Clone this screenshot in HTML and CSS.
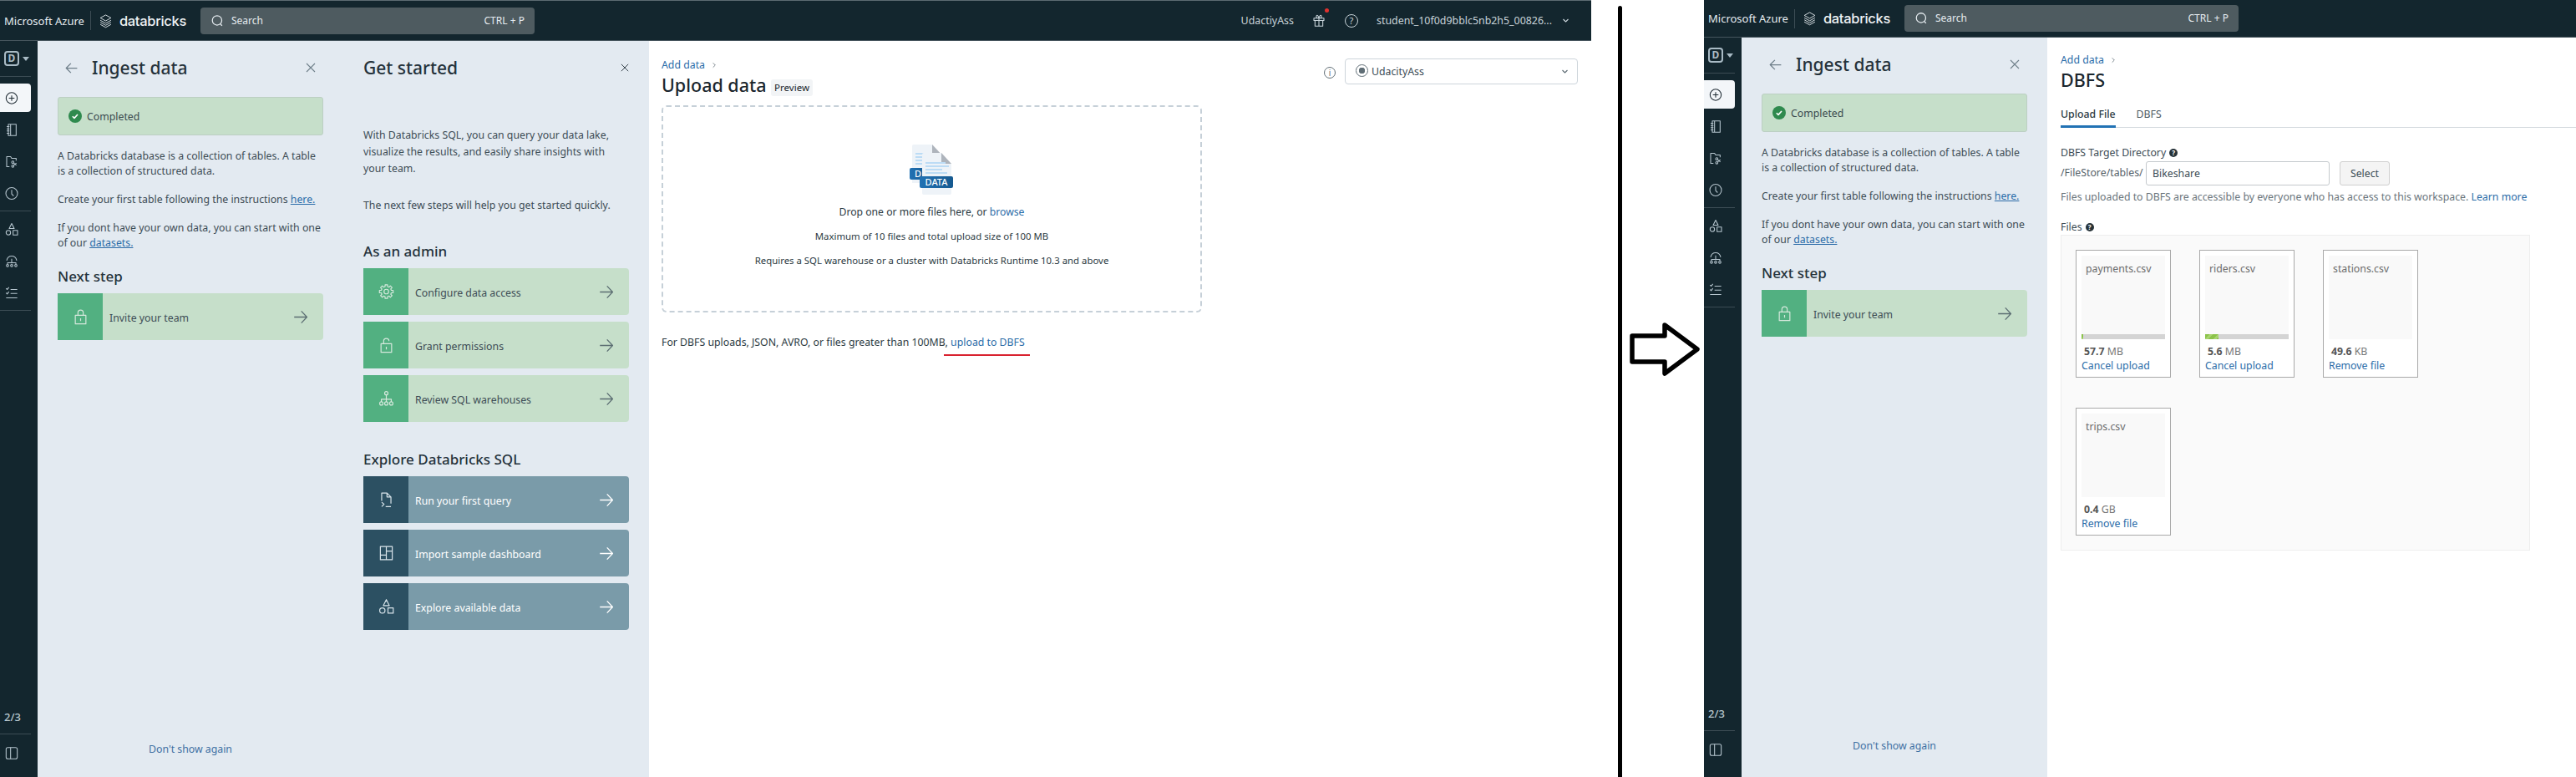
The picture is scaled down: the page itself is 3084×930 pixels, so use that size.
FILE: index.html
```html
<!DOCTYPE html>
<html lang="en">
<head>
    <meta charset="UTF-8">
    <title>Upload data to DBFS</title>
    <link rel="stylesheet" href="styles.css">
</head>
<body>
    <svg class="icon-defs" xmlns="http://www.w3.org/2000/svg">
        <symbol id="i-logo" viewBox="0 0 24 24"><path d="M12 2l9 5-9 5-9-5zM3 11l9 5 9-5M3 14.5l9 5 9-5M3 18l9 5 9-5"/></symbol>
        <symbol id="i-search" viewBox="0 0 24 24"><circle cx="11" cy="11" r="9"/><path d="M17.5 18l3 3.5"/></symbol>
        <symbol id="i-plus" viewBox="0 0 24 24"><circle cx="12" cy="12" r="10"/><path d="M12 7v10M7 12h10"/></symbol>
        <symbol id="i-notebook" viewBox="0 0 24 24"><path d="M6 2h14v20H6zM10 2v20M3 6h5M3 10h5M3 14h5M3 18h5"/></symbol>
        <symbol id="i-repos" viewBox="0 0 24 24"><path d="M8 21H3V3h7l2 3h8v4"/><circle cx="14" cy="13" r="2"/><circle cx="14" cy="20" r="2"/><path d="M15.5 14.5l5 4M15.5 18.5l5-4"/></symbol>
        <symbol id="i-clock" viewBox="0 0 24 24"><circle cx="12" cy="12" r="10.5"/><path d="M12 5.5V13l3.500 3.500"/></symbol>
        <symbol id="i-shapes" viewBox="0 0 24 24"><path d="M12 1.500l4.500 9h-9z"/><circle cx="6" cy="18" r="4"/><path d="M14.500 14h8v8h-8z"/></symbol>
        <symbol id="i-tree" viewBox="0 0 24 24"><path d="M3 11c1-5 5-8 9-8s8 3 9 8M12 8v8M4.500 18v-3h15v3"/><circle cx="4.500" cy="20" r="2"/><circle cx="12" cy="20" r="2"/><circle cx="19.500" cy="20" r="2"/></symbol>
        <symbol id="i-checks" viewBox="0 0 24 24"><path d="M2 4l2 2 3-4M10 6h12M2 12l2 2 3-4M10 13h12M2 21h20"/></symbol>
        <symbol id="i-panel" viewBox="0 0 24 24"><rect x="2" y="2" width="20" height="20" rx="3"/><path d="M10 2v20"/></symbol>
        <symbol id="i-back" viewBox="0 0 24 24"><path d="M23 12H2M11 3l-9 9 9 9"/></symbol>
        <symbol id="i-close" viewBox="0 0 24 24"><path d="M2 2l20 20M22 2L2 22"/></symbol>
        <symbol id="i-arrow" viewBox="0 0 24 24"><path d="M1 12h21M13 2l9.500 10L13 22"/></symbol>
        <symbol id="i-lock" viewBox="0 0 24 24"><rect x="4" y="10" width="16" height="13"/><path d="M8 10V6a4 4 0 0 1 8 0v4M12 14.500v4"/></symbol>
        <symbol id="i-unlock" viewBox="0 0 24 24"><rect x="4" y="10" width="16" height="13"/><path d="M8 10V6a4 4 0 0 1 8 0M12 14.500v4"/></symbol>
        <symbol id="i-gear" viewBox="0 0 24 24"><path d="M10.18 1.66L13.82 1.66L13.89 4.43L16.02 5.31L18.02 3.4L20.6 5.98L18.69 7.98L19.57 10.11L22.34 10.18L22.34 13.82L19.57 13.89L18.69 16.02L20.6 18.02L18.02 20.6L16.02 18.69L13.89 19.57L13.82 22.34L10.18 22.34L10.11 19.57L7.98 18.69L5.98 20.6L3.4 18.02L5.31 16.02L4.43 13.89L1.66 13.82L1.66 10.18L4.43 10.11L5.31 7.98L3.4 5.98L5.98 3.4L7.98 5.31L10.11 4.43z"/><circle cx="12" cy="12" r="3.5"/></symbol>
        <symbol id="i-network" viewBox="0 0 24 24"><circle cx="12" cy="4" r="2.500"/><path d="M12 6.500V17M4.500 17v-4h15v4"/><circle cx="4.500" cy="19.500" r="2.500"/><circle cx="12" cy="19.500" r="2.500"/><circle cx="19.500" cy="19.500" r="2.500"/></symbol>
        <symbol id="i-query" viewBox="0 0 24 24"><path d="M5 14V2h8l6 6v10M13 2v6h6M5 16l3.500 3L5 22.500M11 22.500h8"/></symbol>
        <symbol id="i-dash" viewBox="0 0 24 24"><path d="M3 2h18v20H3zM12 2v20M3 15h9M12 9h9"/></symbol>
        <symbol id="i-gift" viewBox="0 0 24 24"><path d="M3 8h18v4H3zM5 12v10h14V12M12 8v14M12 8C9 8 6.500 6.500 7.500 4S11 3 12 8c1-5 3.500-6.500 4.500-4S15 8 12 8z"/></symbol>
        <symbol id="i-chevron" viewBox="0 0 24 24"><path d="M4 8l8 8 8-8"/></symbol>
        <symbol id="i-crumb" viewBox="0 0 24 24"><path d="M8 4l8 8-8 8"/></symbol>
    </svg>

    <!-- before: upload data page -->
    <section class="shot shot-before">
        <header class="topbar">
            <span class="brand-azure">Microsoft Azure</span>
            <span class="brand-sep"></span>
            <svg class="brand-logo"><use href="#i-logo"/></svg>
            <span class="brand-name">databricks</span>
            <div class="search">
                <svg class="search-icon"><use href="#i-search"/></svg>
                <span>Search</span>
                <span class="search-key">CTRL + P</span>
            </div>
            <div class="topbar-right">
                <span class="topbar-workspace">UdactiyAss</span>
                <span class="gift"><svg class="gift-icon"><use href="#i-gift"/></svg><span class="gift-dot"></span></span>
                <span class="ring ring-help">?</span>
                <span class="topbar-user">student_10f0d9bblc5nb2h5_00826...</span>
                <svg class="topbar-chevron"><use href="#i-chevron"/></svg>
            </div>
        </header>
        <div class="shot-body">
            <nav class="sidebar">
                <div class="side-group side-workspace"><span class="ws-badge">D</span><span class="ws-caret"></span></div>
                <div class="side-group side-group-main">
                    <span class="side-item side-active"><svg><use href="#i-plus"/></svg></span>
                    <span class="side-item"><svg><use href="#i-notebook"/></svg></span>
                    <span class="side-item"><svg><use href="#i-repos"/></svg></span>
                    <span class="side-item"><svg><use href="#i-clock"/></svg></span>
                </div>
                <div class="side-group">
                    <span class="side-item"><svg><use href="#i-shapes"/></svg></span>
                    <span class="side-item"><svg><use href="#i-tree"/></svg></span>
                    <span class="side-item"><svg><use href="#i-checks"/></svg></span>
                </div>
                <div class="side-foot">
                    <div class="side-count">2/3</div>
                    <span class="side-item"><svg><use href="#i-panel"/></svg></span>
                </div>
            </nav>
            <aside class="guide">
                <div class="guide-col">
                    <div class="guide-title">
                        <svg class="guide-back"><use href="#i-back"/></svg>
                        <h2>Ingest data</h2>
                        <svg class="guide-close"><use href="#i-close"/></svg>
                    </div>
                    <div class="status"><svg class="status-icon" viewBox="0 0 16 16"><circle cx="8" cy="8" r="8"/><path d="M4.800 8.200l2.200 2.200 4-4.400"/></svg><span class="status-text">Completed</span></div>
                    <p class="ingest-text">A Databricks database is a collection of tables. A table is a collection of structured data.</p>
                    <p class="ingest-text">Create your first table following the instructions <a href="#">here.</a></p>
                    <p class="ingest-text">If you dont have your own data, you can start with one of our <a href="#">datasets.</a></p>
                    <h3 class="step-heading">Next step</h3>
                    <div class="step-card step-green">
                        <span class="step-icon"><svg><use href="#i-lock"/></svg></span>
                        <span class="step-label">Invite your team</span>
                        <svg class="step-arrow"><use href="#i-arrow"/></svg>
                    </div>
                    <a class="guide-dismiss" href="#">Don't show again</a>
                </div>
                <div class="guide-col">
                    <div class="guide-title guide-title-plain">
                        <h2>Get started</h2>
                        <svg class="guide-close guide-close-small"><use href="#i-close"/></svg>
                    </div>
                    <p class="intro-text intro-first">With Databricks SQL, you can query your data lake, visualize the results, and easily share insights with your team.</p>
                    <p class="intro-text">The next few steps will help you get started quickly.</p>
                    <h3 class="step-heading step-heading-wide">As an admin</h3>
                    <div class="step-list">
                        <div class="step-card step-green">
                            <span class="step-icon"><svg><use href="#i-gear"/></svg></span>
                            <span class="step-label">Configure data access</span>
                            <svg class="step-arrow"><use href="#i-arrow"/></svg>
                        </div>
                        <div class="step-card step-green">
                            <span class="step-icon"><svg><use href="#i-unlock"/></svg></span>
                            <span class="step-label">Grant permissions</span>
                            <svg class="step-arrow"><use href="#i-arrow"/></svg>
                        </div>
                        <div class="step-card step-green">
                            <span class="step-icon"><svg><use href="#i-network"/></svg></span>
                            <span class="step-label">Review SQL warehouses</span>
                            <svg class="step-arrow"><use href="#i-arrow"/></svg>
                        </div>
                    </div>
                    <h3 class="step-heading step-heading-wide">Explore Databricks SQL</h3>
                    <div class="step-list">
                        <div class="step-card step-blue">
                            <span class="step-icon"><svg><use href="#i-query"/></svg></span>
                            <span class="step-label">Run your first query</span>
                            <svg class="step-arrow"><use href="#i-arrow"/></svg>
                        </div>
                        <div class="step-card step-blue">
                            <span class="step-icon"><svg><use href="#i-dash"/></svg></span>
                            <span class="step-label">Import sample dashboard</span>
                            <svg class="step-arrow"><use href="#i-arrow"/></svg>
                        </div>
                        <div class="step-card step-blue">
                            <span class="step-icon"><svg><use href="#i-shapes"/></svg></span>
                            <span class="step-label">Explore available data</span>
                            <svg class="step-arrow"><use href="#i-arrow"/></svg>
                        </div>
                    </div>
                </div>
            </aside>
            <main class="content">
                <div class="content-head">
                    <div>
                        <div class="crumb"><a href="#">Add data</a><svg class="crumb-sep"><use href="#i-crumb"/></svg></div>
                        <h1 class="page-title">Upload data <span class="badge">Preview</span></h1>
                    </div>
                    <div class="warehouse">
                        <span class="ring ring-info">i</span>
                        <div class="warehouse-select">
                            <span class="warehouse-dot"></span>
                            <span>UdacityAss</span>
                            <svg class="warehouse-chevron"><use href="#i-chevron"/></svg>
                        </div>
                    </div>
                </div>
                <div class="dropzone">
                    <svg class="data-art" viewBox="0 0 54 60" xmlns="http://www.w3.org/2000/svg">
                        <defs>
                            <linearGradient id="tag" x1="0" y1="0" x2="1" y2="0"><stop offset="0" stop-color="#2272b4"/><stop offset="1" stop-color="#15598f"/></linearGradient>
                        </defs>
                        <path d="M3 2a2 2 0 0 1 2-2h22l14 15v31H3z" fill="#eef3f8"/>
                        <path d="M27 0l14 15H27z" fill="#aeb4bc"/>
                        <path d="M7 11h10M7 15h10M7 19h10M7 23h10" stroke="#bcdcf5" stroke-width="2"/>
                        <rect x="0" y="28" width="24" height="14" rx="2" fill="url(#tag)"/>
                        <text class="data-art-text" x="6" y="39">D</text>
                        <path d="M15 12a2 2 0 0 1 2-2h21l12 13v35a2 2 0 0 1-2 2H17a2 2 0 0 1-2-2z" fill="#eef3f8"/>
                        <path d="M38 10l12 13H38z" fill="#aeb4bc"/>
                        <path d="M19 22h24M19 26h28M19 30h20M19 34h26" stroke="#bcdcf5" stroke-width="2"/>
                        <rect x="12" y="38" width="40" height="14" rx="2" fill="url(#tag)"/>
                        <text class="data-art-text" x="32" y="49" text-anchor="middle">DATA</text>
                    </svg>
                    <p class="drop-line drop-first">Drop one or more files here, or <a href="#">browse</a></p>
                    <p class="drop-line">Maximum of 10 files and total upload size of 100 MB</p>
                    <p class="drop-line">Requires a SQL warehouse or a cluster with Databricks Runtime 10.3 and above</p>
                </div>
                <p class="dbfs-note">For DBFS uploads, JSON, AVRO, or files greater than 100MB, <a class="dbfs-link" href="#">upload to DBFS</a></p>
            </main>
        </div>
    </section>

    <div class="gutter">
        <div class="gutter-line"></div>
        <svg class="gutter-arrow" viewBox="0 0 84 64" xmlns="http://www.w3.org/2000/svg"><path d="M3 16h39V3l39 29-39 29V47H3z"/></svg>
    </div>

    <!-- after: DBFS file upload page -->
    <section class="shot shot-after">
        <header class="topbar">
            <span class="brand-azure">Microsoft Azure</span>
            <span class="brand-sep"></span>
            <svg class="brand-logo"><use href="#i-logo"/></svg>
            <span class="brand-name">databricks</span>
            <div class="search">
                <svg class="search-icon"><use href="#i-search"/></svg>
                <span>Search</span>
                <span class="search-key">CTRL + P</span>
            </div>
        </header>
        <div class="shot-body">
            <nav class="sidebar">
                <div class="side-group side-workspace"><span class="ws-badge">D</span><span class="ws-caret"></span></div>
                <div class="side-group side-group-main">
                    <span class="side-item side-active"><svg><use href="#i-plus"/></svg></span>
                    <span class="side-item"><svg><use href="#i-notebook"/></svg></span>
                    <span class="side-item"><svg><use href="#i-repos"/></svg></span>
                    <span class="side-item"><svg><use href="#i-clock"/></svg></span>
                </div>
                <div class="side-group">
                    <span class="side-item"><svg><use href="#i-shapes"/></svg></span>
                    <span class="side-item"><svg><use href="#i-tree"/></svg></span>
                    <span class="side-item"><svg><use href="#i-checks"/></svg></span>
                </div>
                <div class="side-foot">
                    <div class="side-count">2/3</div>
                    <span class="side-item"><svg><use href="#i-panel"/></svg></span>
                </div>
            </nav>
            <aside class="guide">
                <div class="guide-col">
                    <div class="guide-title">
                        <svg class="guide-back"><use href="#i-back"/></svg>
                        <h2>Ingest data</h2>
                        <svg class="guide-close"><use href="#i-close"/></svg>
                    </div>
                    <div class="status"><svg class="status-icon" viewBox="0 0 16 16"><circle cx="8" cy="8" r="8"/><path d="M4.800 8.200l2.200 2.200 4-4.400"/></svg><span class="status-text">Completed</span></div>
                    <p class="ingest-text">A Databricks database is a collection of tables. A table is a collection of structured data.</p>
                    <p class="ingest-text">Create your first table following the instructions <a href="#">here.</a></p>
                    <p class="ingest-text">If you dont have your own data, you can start with one of our <a href="#">datasets.</a></p>
                    <h3 class="step-heading">Next step</h3>
                    <div class="step-card step-green">
                        <span class="step-icon"><svg><use href="#i-lock"/></svg></span>
                        <span class="step-label">Invite your team</span>
                        <svg class="step-arrow"><use href="#i-arrow"/></svg>
                    </div>
                    <a class="guide-dismiss" href="#">Don't show again</a>
                </div>
            </aside>
            <main class="content">
                <div class="crumb"><a href="#">Add data</a><svg class="crumb-sep"><use href="#i-crumb"/></svg></div>
                <h1 class="page-title">DBFS</h1>
                <div class="tabs">
                    <span class="tab tab-active">Upload File</span>
                    <span class="tab">DBFS</span>
                </div>
                <div class="field-label">DBFS Target Directory <span class="help-dot">?</span></div>
                <div class="path-row">
                    <span class="path-prefix">/FileStore/tables/</span>
                    <span class="path-input">Bikeshare</span>
                    <span class="path-button">Select</span>
                </div>
                <p class="path-note">Files uploaded to DBFS are accessible by everyone who has access to this workspace. <a href="#">Learn more</a></p>
                <div class="field-label files-label">Files <span class="help-dot">?</span></div>
                <div class="files">
                    <div class="tile">
                        <div class="tile-thumb">
                            <div class="tile-name">payments.csv</div>
                            <div class="tile-bar"><div class="tile-fill" style="width: 1.5%"></div></div>
                        </div>
                        <div class="tile-size"><b>57.7</b> MB</div>
                        <a class="tile-link" href="#">Cancel upload</a>
                    </div>
                    <div class="tile">
                        <div class="tile-thumb">
                            <div class="tile-name">riders.csv</div>
                            <div class="tile-bar"><div class="tile-fill" style="width: 16%"></div></div>
                        </div>
                        <div class="tile-size"><b>5.6</b> MB</div>
                        <a class="tile-link" href="#">Cancel upload</a>
                    </div>
                    <div class="tile">
                        <div class="tile-thumb">
                            <div class="tile-name">stations.csv</div>
                        </div>
                        <div class="tile-size"><b>49.6</b> KB</div>
                        <a class="tile-link" href="#">Remove file</a>
                    </div>
                    <div class="tile">
                        <div class="tile-thumb">
                            <div class="tile-name">trips.csv</div>
                        </div>
                        <div class="tile-size"><b>0.4</b> GB</div>
                        <a class="tile-link" href="#">Remove file</a>
                    </div>
                </div>
            </main>
        </div>
    </section>
</body>
</html>
```
FILE: styles.css
```css
* {
    box-sizing: border-box;
}
html, body {
    height: 930px;
    overflow: hidden;
}
body {
    display: flex;
    margin: 0;
    background-color: #fff;
    color: #1f2b33;
    font-family: "Noto Sans", "Open Sans", sans-serif;
    font-size: 12.3px;
    line-height: 18px;
}
h1, h2, h3, p {
    margin: 0;
    font-weight: 400;
}
a {
    color: #2b6ca8;
    text-decoration: none;
}
svg {
    fill: none;
    stroke: currentColor;
    stroke-width: 1.6;
    stroke-linejoin: round;
}
.icon-defs {
    display: none;
}

/* the two captures and the gutter between them */
.shot {
    display: flex;
    flex-direction: column;
    height: 930px;
}
.shot-before {
    width: 1905px;
}
.shot-after {
    width: 1044px;
}
.shot-body {
    display: flex;
    flex: 1;
    min-height: 0;
}
.gutter {
    position: relative;
    flex: 0 0 135px;
    padding: 7px 0 0 32px;
}
.gutter-line {
    width: 5px;
    height: 100%;
    background-color: #000;
    border-radius: 3px 3px 0 0;
}
.gutter-arrow {
    position: absolute;
    top: 386px;
    left: 46px;
    width: 84px;
    height: 64px;
    stroke: #000;
    stroke-width: 5.5;
    fill: #fff;
}

/* top bar */
.topbar {
    display: flex;
    align-items: center;
    flex: none;
    background-color: #13262e;
    color: #e6ecf0;
    padding-left: 5px;
    border-bottom: 1px solid #46555d;
}
.shot-before .topbar {
    height: 49px;
    border-top: 1px solid #5c6b72;
}
.shot-after .topbar {
    height: 45px;
}
.brand-azure {
    font-size: 13px;
}
.brand-sep {
    width: 1px;
    height: 23px;
    margin: 0 9px 0 7px;
    background-color: #3c4c54;
}
.brand-logo {
    width: 17px;
    height: 18px;
    stroke-width: 1.3;
    color: #dfe6ea;
}
.brand-name {
    width: 85px;
    margin-left: 8px;
    font-family: "Inter", sans-serif;
    font-size: 16.5px;
    font-weight: 500;
    color: #eef2f4;
    letter-spacing: -0.3px;
    white-space: nowrap;
}
.search {
    display: flex;
    align-items: center;
    width: 400px;
    height: 32px;
    margin-left: 12px;
    padding: 0 12px 0 13px;
    background-color: #4e5b60;
    border-radius: 4px;
    font-size: 12px;
}
.search-icon {
    width: 15px;
    height: 16px;
    margin-right: 9px;
    stroke-width: 2;
}
.search-key {
    margin-left: auto;
}
.topbar-right {
    display: flex;
    align-items: center;
    margin-left: auto;
    padding-right: 26px;
    font-size: 12.4px;
    color: #c9d4da;
}
.topbar-workspace {
    margin-right: 22px;
}
.gift {
    position: relative;
    display: flex;
    margin-right: 23px;
}
.gift-icon {
    width: 16px;
    height: 17px;
    stroke-width: 1.6;
}
.gift-dot {
    position: absolute;
    top: -6px;
    right: -4px;
    width: 5px;
    height: 5px;
    border-radius: 50%;
    background-color: #e0312e;
}
.ring {
    display: inline-flex;
    align-items: center;
    justify-content: center;
    border: 1px solid currentColor;
    border-radius: 50%;
}
.ring-help {
    width: 16px;
    height: 16px;
    margin-right: 22px;
    font-size: 11px;
    line-height: 1;
}
.topbar-chevron {
    width: 9px;
    height: 9px;
    margin-left: 12px;
    stroke-width: 3;
}

/* icon rail */
.sidebar {
    display: flex;
    flex-direction: column;
    flex: 0 0 45px;
    padding: 0 8px 20px 0;
    background-color: #13262e;
    color: #b7c6cf;
}
.shot-after .sidebar {
    padding-bottom: 24px;
}
.side-group {
    display: flex;
    flex-direction: column;
    gap: 4px;
    padding: 4px 0;
    border-bottom: 1px solid #3c4c54;
}
.side-workspace {
    flex-direction: row;
    align-items: center;
    height: 43px;
    padding: 0 0 0 5px;
    gap: 4px;
}
.side-group-main {
    padding-top: 8px;
}
.ws-badge {
    width: 18px;
    height: 18px;
    border: 2px solid #a9bbc5;
    border-radius: 4px;
    font-size: 12px;
    font-weight: 700;
    line-height: 14px;
    text-align: center;
    color: #a9bbc5;
}
.ws-caret {
    width: 0;
    height: 0;
    border: 4px solid transparent;
    border-top: 5px solid #a9bbc5;
    border-bottom: 0;
}
.side-item {
    display: flex;
    align-items: center;
    justify-content: center;
    width: 37px;
    height: 34px;
    padding-right: 9px;
}
.side-item svg {
    width: 16px;
    height: 17px;
    stroke-width: 1.6;
}
.side-active {
    background-color: #f3f6f9;
    color: #1f2b33;
    border-radius: 0 4px 4px 0;
}
.side-foot {
    margin-top: auto;
}
.side-count {
    padding: 0 0 11px 5px;
    border-bottom: 1px solid #3c4c54;
    font-size: 13px;
    font-weight: 500;
    color: #b7c6cf;
}
.side-foot .side-item {
    height: 18px;
    margin-top: 13px;
}

/* onboarding panel */
.guide {
    display: flex;
    flex: none;
    background-color: #e3eaf1;
}
.guide-col {
    display: flex;
    flex-direction: column;
    width: 366px;
    padding: 0 24px 24px;
}
.shot-after .guide-col {
    padding-bottom: 28px;
}
.guide-title {
    display: flex;
    align-items: center;
    flex: none;
    height: 32px;
    margin: 16px 0 19px;
    padding-right: 9px;
}
.guide-title h2 {
    font-size: 21px;
    font-weight: 500;
    color: #25323b;
}
.guide-title-plain {
    padding-right: 0;
}
.guide-back {
    width: 15px;
    height: 15px;
    margin: 0 17px 0 9px;
    color: #6f7f8a;
    stroke-width: 2;
}
.guide-close {
    width: 12px;
    height: 12px;
    margin-left: auto;
    color: #6f7f8a;
    stroke-width: 2.2;
}
.guide-close-small {
    width: 10px;
    height: 10px;
    color: #25323b;
    stroke-width: 2.2;
}
.status {
    display: flex;
    align-items: center;
    flex: none;
    height: 46px;
    padding-left: 12px;
    gap: 6px;
    background-color: #c6dfca;
    border: 1px solid #bccfc3;
    border-radius: 3px;
    color: #3b4a4f;
}
.status-text {
    margin-top: 2px;
}
.status-icon {
    width: 16px;
    height: 16px;
    fill: #2f8a4e;
    stroke: none;
}
.status-icon path {
    fill: none;
    stroke: #fff;
    stroke-width: 1.6;
}
.ingest-text {
    margin-top: 16px;
    color: #3d4c55;
}
.ingest-text a,
.intro-text a {
    text-decoration: underline;
}
.step-heading {
    margin: 19px 0 8px;
    font-size: 17px;
    font-weight: 500;
    line-height: 24px;
    color: #25323b;
}
.step-heading-wide {
    margin-top: 33px;
}
.intro-text {
    margin-top: 24px;
    color: #3d4c55;
    line-height: 20px;
}
.intro-first {
    margin-top: 36px;
}
.step-list {
    display: flex;
    flex-direction: column;
    gap: 8px;
}
.step-card {
    display: flex;
    align-items: center;
    flex: none;
    height: 56px;
    padding-right: 18px;
    border-radius: 0 4px 4px 0;
}
.step-green {
    background-color: #c6dfca;
    color: #3d4c55;
}
.step-blue {
    background-color: #7a9ba9;
    color: #fff;
}
.step-icon {
    display: flex;
    align-items: center;
    justify-content: center;
    width: 54px;
    align-self: stretch;
    color: #d5e8dc;
}
.step-green .step-icon {
    background-color: #52b081;
}
.step-blue .step-icon {
    background-color: #2c5062;
    color: #d9e4ea;
}
.step-icon svg {
    width: 19px;
    height: 20px;
    stroke-width: 1.5;
}
.step-label {
    margin: 4px 0 0 8px;
}
.step-arrow {
    width: 18px;
    height: 17px;
    margin-left: auto;
    stroke-width: 1.8;
}
.step-green .step-arrow {
    color: #5b6d72;
}
.guide-dismiss {
    margin-top: auto;
    text-align: center;
    color: #3f70a3;
}

/* main content */
.content {
    flex: 1;
}
.shot-before .content {
    padding: 20px 16px 0 15px;
}
.shot-after .content {
    padding: 18px 0 0 16px;
}
.content-head {
    display: flex;
    justify-content: space-between;
}
.crumb {
    display: flex;
    align-items: center;
    height: 17px;
}
.crumb-sep {
    width: 8px;
    height: 8px;
    margin-left: 7px;
    color: #5d6b73;
    stroke-width: 2.4;
}
.page-title {
    font-size: 21.5px;
    font-weight: 500;
    line-height: 32px;
    color: #1b262d;
}
.badge {
    display: inline-block;
    padding: 0 4px;
    background-color: #f2f4f6;
    border-radius: 3px;
    font-size: 11.5px;
    font-weight: 400;
    line-height: 20px;
    vertical-align: 1px;
}
.warehouse {
    display: flex;
    align-items: center;
    gap: 11px;
    height: 31px;
    margin-top: 1px;
}
.ring-info {
    width: 14px;
    height: 14px;
    margin-top: 2px;
    color: #5f6d75;
    font-size: 10px;
    line-height: 1;
}
.warehouse-select {
    display: flex;
    align-items: center;
    width: 279px;
    height: 31px;
    padding: 0 10px 0 12px;
    gap: 4px;
    border: 1px solid #cdd5db;
    border-radius: 4px;
    color: #3d4c55;
}
.warehouse-dot {
    width: 15px;
    height: 15px;
    margin-top: -2px;
    border: 1.5px solid #5f6d75;
    border-radius: 50%;
    background: radial-gradient(circle, #5f6d75 0 3.5px, transparent 4px);
}
.warehouse-chevron {
    width: 9px;
    height: 9px;
    margin-left: auto;
    color: #5f6d75;
    stroke-width: 3;
}
.dropzone {
    display: flex;
    flex-direction: column;
    align-items: center;
    width: 647px;
    height: 248px;
    margin-top: 8px;
    padding-top: 45px;
    border: 2px dashed #c6d0d8;
    border-radius: 6px;
}
.data-art {
    width: 54px;
    height: 60px;
    stroke: none;
}
.data-art path[stroke] {
    fill: none;
}
.data-art-text {
    fill: #fff;
    font-size: 11px;
    font-weight: 500;
}
.drop-line {
    margin-top: 11px;
    color: #2c3a42;
    font-size: 11.4px;
}
.drop-first {
    margin-top: 12px;
    font-size: 12.2px;
}
.dbfs-note {
    margin-top: 27px;
    color: #2c3a42;
}
.dbfs-link {
    position: relative;
}
/* red hand-drawn mark under the link */
.dbfs-link::after {
    content: "";
    position: absolute;
    left: -8px;
    right: -6px;
    bottom: -8px;
    height: 2px;
    background-color: #d9222f;
}

/* DBFS form */
.tabs {
    display: flex;
    gap: 25px;
    margin-top: 16px;
    border-bottom: 1px solid #d5dadf;
}
.tab {
    margin-bottom: -1px;
    padding-bottom: 4px;
    border-bottom: 3px solid transparent;
    color: #4d5a63;
}
.tab-active {
    border-bottom-color: #2272b4;
    color: #2c3a42;
    font-weight: 500;
}
.field-label {
    display: flex;
    align-items: center;
    gap: 4px;
    margin-top: 21px;
    color: #3d4c55;
}
.files-label {
    margin-top: 18px;
}
.help-dot {
    display: inline-flex;
    align-items: center;
    justify-content: center;
    width: 10px;
    height: 10px;
    border-radius: 50%;
    background-color: #263238;
    color: #fff;
    font-size: 8px;
    font-weight: 700;
    line-height: 1;
}
.path-row {
    display: flex;
    align-items: center;
    margin-top: 1px;
}
.path-prefix {
    width: 102px;
    margin-top: -1px;
    color: #55626a;
}
.path-input {
    display: flex;
    align-items: center;
    width: 220px;
    height: 29px;
    padding-left: 7px;
    border: 1px solid #c4c9cd;
    border-radius: 3px;
    color: #3d4c55;
}
.path-button {
    display: flex;
    align-items: center;
    justify-content: center;
    width: 60px;
    height: 29px;
    margin-left: 12px;
    background-color: #f4f4f4;
    border: 1px solid #cfcfcf;
    border-radius: 3px;
    color: #3d4c55;
}
.path-note {
    margin-top: 5px;
    color: #6a757c;
}
.files {
    display: flex;
    flex-wrap: wrap;
    gap: 35px 34px;
    width: 562px;
    height: 378px;
    padding: 17px;
    background-color: #fafafa;
    border: 1px solid #eeeeee;
}
.tile {
    width: 114px;
    height: 153px;
    padding: 6px;
    background-color: #fff;
    border: 1px solid #a9a9a9;
}
.tile-thumb {
    position: relative;
    height: 100px;
    padding: 7px 5px;
    background-color: #f9f9f9;
    color: #6b6b6b;
}
.tile-bar {
    position: absolute;
    left: 0;
    right: 0;
    bottom: 0;
    height: 6px;
    background-color: #d4d4d4;
}
.tile-fill {
    height: 100%;
    background: repeating-linear-gradient(135deg, #8bc34a 0 4px, #a8d46f 4px 7px);
}
.tile-size {
    margin-top: 6px;
    padding-left: 3px;
    color: #777;
}
.tile-size b {
    color: #555;
}
.tile-link {
    display: block;
    margin-top: -1px;
    color: #2b6ca8;
}
```
